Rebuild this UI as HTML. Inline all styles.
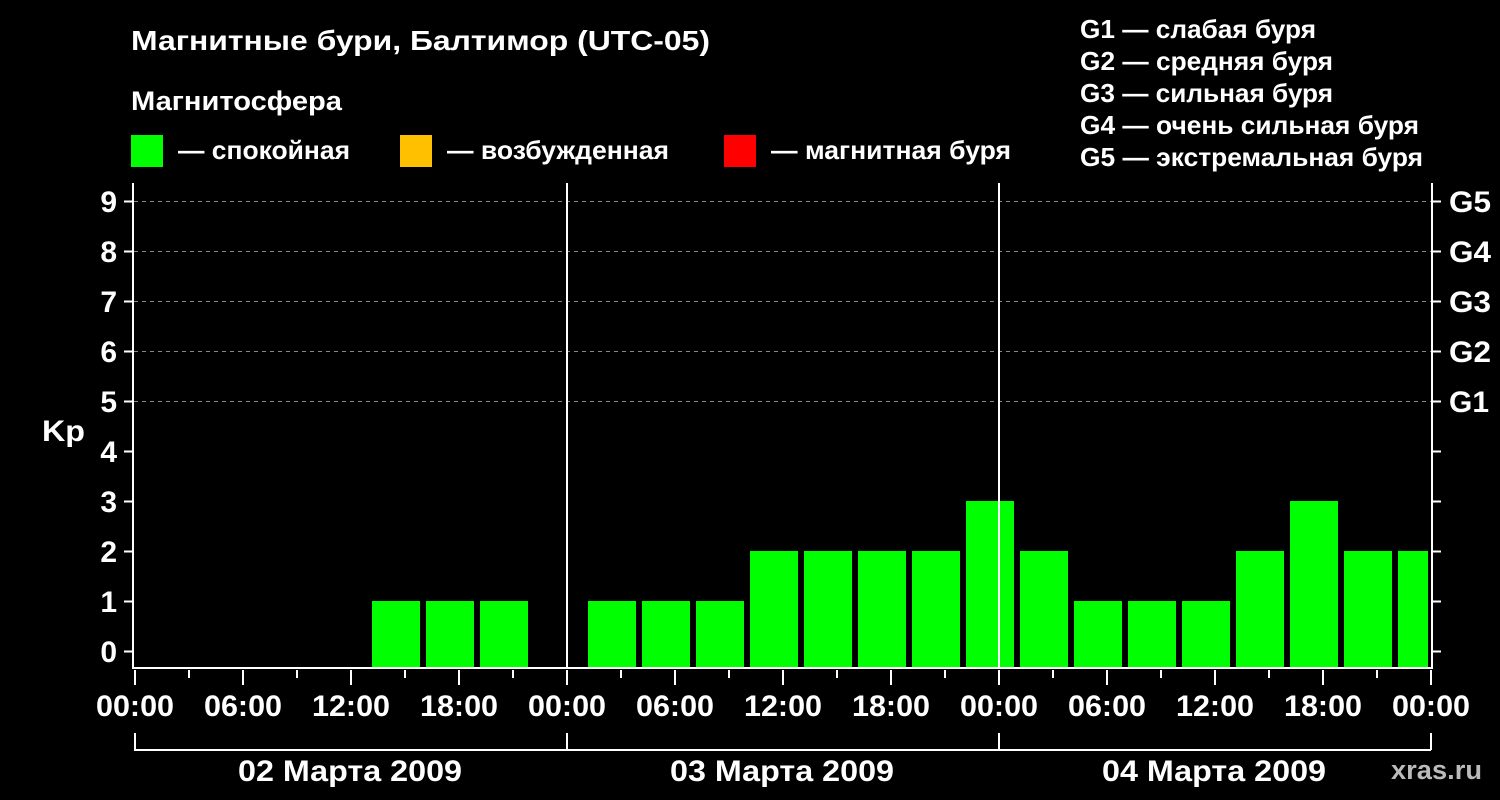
<!DOCTYPE html>
<html><head><meta charset="utf-8"><style>
html,body{margin:0;padding:0;background:#000;width:1500px;height:800px;overflow:hidden}
svg text{font-family:"Liberation Sans",sans-serif;font-weight:bold;fill:#fff}
</style></head><body>
<svg width="1500" height="800" xmlns="http://www.w3.org/2000/svg">
<rect width="1500" height="800" fill="#000"/>
<g font-size="26">
<text x="131" y="50" font-size="28" textLength="579" lengthAdjust="spacingAndGlyphs">Магнитные бури, Балтимор (UTC-05)</text>
<text x="131" y="110" font-size="27" textLength="211" lengthAdjust="spacingAndGlyphs">Магнитосфера</text>
<text x="178" y="159" textLength="172" lengthAdjust="spacingAndGlyphs">— спокойная</text>
<text x="447" y="159" textLength="222" lengthAdjust="spacingAndGlyphs">— возбужденная</text>
<text x="771" y="159" textLength="240" lengthAdjust="spacingAndGlyphs">— магнитная буря</text>
<text x="1080" y="38" textLength="236" lengthAdjust="spacingAndGlyphs">G1 — слабая буря</text>
<text x="1080" y="70" textLength="253" lengthAdjust="spacingAndGlyphs">G2 — средняя буря</text>
<text x="1080" y="102" textLength="253" lengthAdjust="spacingAndGlyphs">G3 — сильная буря</text>
<text x="1080" y="134" textLength="339" lengthAdjust="spacingAndGlyphs">G4 — очень сильная буря</text>
<text x="1080" y="166" textLength="343" lengthAdjust="spacingAndGlyphs">G5 — экстремальная буря</text>
</g>
<rect x="131" y="135" width="32" height="32" fill="#00ff00"/>
<rect x="400" y="135" width="32" height="32" fill="#ffc000"/>
<rect x="724" y="135" width="32" height="32" fill="#ff0000"/>
<g stroke="#888" stroke-dasharray="4,4" stroke-width="1">
<line x1="134" y1="201.5" x2="1431" y2="201.5"/>
<line x1="134" y1="251.5" x2="1431" y2="251.5"/>
<line x1="134" y1="301.5" x2="1431" y2="301.5"/>
<line x1="134" y1="351.5" x2="1431" y2="351.5"/>
<line x1="134" y1="401.5" x2="1431" y2="401.5"/>
</g>
<g fill="#00ff00">
<rect x="372" y="601" width="48" height="67"/>
<rect x="426" y="601" width="48" height="67"/>
<rect x="480" y="601" width="48" height="67"/>
<rect x="588" y="601" width="48" height="67"/>
<rect x="642" y="601" width="48" height="67"/>
<rect x="696" y="601" width="48" height="67"/>
<rect x="750" y="551" width="48" height="117"/>
<rect x="804" y="551" width="48" height="117"/>
<rect x="858" y="551" width="48" height="117"/>
<rect x="912" y="551" width="48" height="117"/>
<rect x="966" y="501" width="48" height="167"/>
<rect x="1020" y="551" width="48" height="117"/>
<rect x="1074" y="601" width="48" height="67"/>
<rect x="1128" y="601" width="48" height="67"/>
<rect x="1182" y="601" width="48" height="67"/>
<rect x="1236" y="551" width="48" height="117"/>
<rect x="1290" y="501" width="48" height="167"/>
<rect x="1344" y="551" width="48" height="117"/>
<rect x="1398" y="551" width="30" height="117"/>
</g>
<g stroke="#fff" stroke-width="2" fill="none">
<path d="M133 183 V668 H1432 V183"/>
<line x1="567" y1="183" x2="567" y2="668"/>
<line x1="999" y1="183" x2="999" y2="668"/>
<path d="M124 201.5h9M124 251.5h9M124 301.5h9M124 351.5h9M124 401.5h9M124 451.5h9M124 501.5h9M124 551.5h9M124 601.5h9M124 651.5h9"/>
<path d="M1432 201.5h9M1432 251.5h9M1432 301.5h9M1432 351.5h9M1432 401.5h9M1432 451.5h9M1432 501.5h9M1432 551.5h9M1432 601.5h9M1432 651.5h9"/>
<path d="M135 670v15M189 670v8M243 670v15M297 670v8M351 670v15M405 670v8M459 670v15M513 670v8M567 670v15M621 670v8M675 670v15M729 670v8M783 670v15M837 670v8M891 670v15M945 670v8M999 670v15M1053 670v8M1107 670v15M1161 670v8M1215 670v15M1269 670v8M1323 670v15M1377 670v8M1431 670v15"/>
<path d="M135 733v17H1431M567 733v17M999 733v17M1431 733v17"/>
</g>
<g font-size="30" text-anchor="end">
<text x="117" y="662">0</text><text x="117" y="612">1</text><text x="117" y="562">2</text>
<text x="117" y="512">3</text><text x="117" y="462">4</text><text x="117" y="412">5</text>
<text x="117" y="362">6</text><text x="117" y="312">7</text><text x="117" y="262">8</text><text x="117" y="212">9</text>
</g>
<text x="42" y="441" font-size="30" textLength="43" lengthAdjust="spacingAndGlyphs">Kp</text>
<g font-size="30">
<text x="1449" y="212" textLength="42" lengthAdjust="spacingAndGlyphs">G5</text><text x="1449" y="262" textLength="42" lengthAdjust="spacingAndGlyphs">G4</text><text x="1449" y="312" textLength="42" lengthAdjust="spacingAndGlyphs">G3</text>
<text x="1449" y="362" textLength="42" lengthAdjust="spacingAndGlyphs">G2</text><text x="1449" y="412" textLength="40" lengthAdjust="spacingAndGlyphs">G1</text>
</g>
<g font-size="30" text-anchor="middle">
<text x="135" y="716" textLength="78" lengthAdjust="spacingAndGlyphs">00:00</text><text x="243" y="716" textLength="78" lengthAdjust="spacingAndGlyphs">06:00</text><text x="351" y="716" textLength="78" lengthAdjust="spacingAndGlyphs">12:00</text><text x="459" y="716" textLength="78" lengthAdjust="spacingAndGlyphs">18:00</text>
<text x="567" y="716" textLength="78" lengthAdjust="spacingAndGlyphs">00:00</text><text x="675" y="716" textLength="78" lengthAdjust="spacingAndGlyphs">06:00</text><text x="783" y="716" textLength="78" lengthAdjust="spacingAndGlyphs">12:00</text><text x="891" y="716" textLength="78" lengthAdjust="spacingAndGlyphs">18:00</text>
<text x="999" y="716" textLength="78" lengthAdjust="spacingAndGlyphs">00:00</text><text x="1107" y="716" textLength="78" lengthAdjust="spacingAndGlyphs">06:00</text><text x="1215" y="716" textLength="78" lengthAdjust="spacingAndGlyphs">12:00</text><text x="1323" y="716" textLength="78" lengthAdjust="spacingAndGlyphs">18:00</text>
<text x="1431" y="716" textLength="78" lengthAdjust="spacingAndGlyphs">00:00</text>
<text x="350" y="781" textLength="224" lengthAdjust="spacingAndGlyphs">02 Марта 2009</text>
<text x="782" y="781" textLength="224" lengthAdjust="spacingAndGlyphs">03 Марта 2009</text>
<text x="1214" y="781" textLength="224" lengthAdjust="spacingAndGlyphs">04 Марта 2009</text>
</g>
<text x="1391" y="779" font-size="27" style="fill:#bbb" textLength="91" lengthAdjust="spacingAndGlyphs">xras.ru</text>
</svg>
</body></html>
